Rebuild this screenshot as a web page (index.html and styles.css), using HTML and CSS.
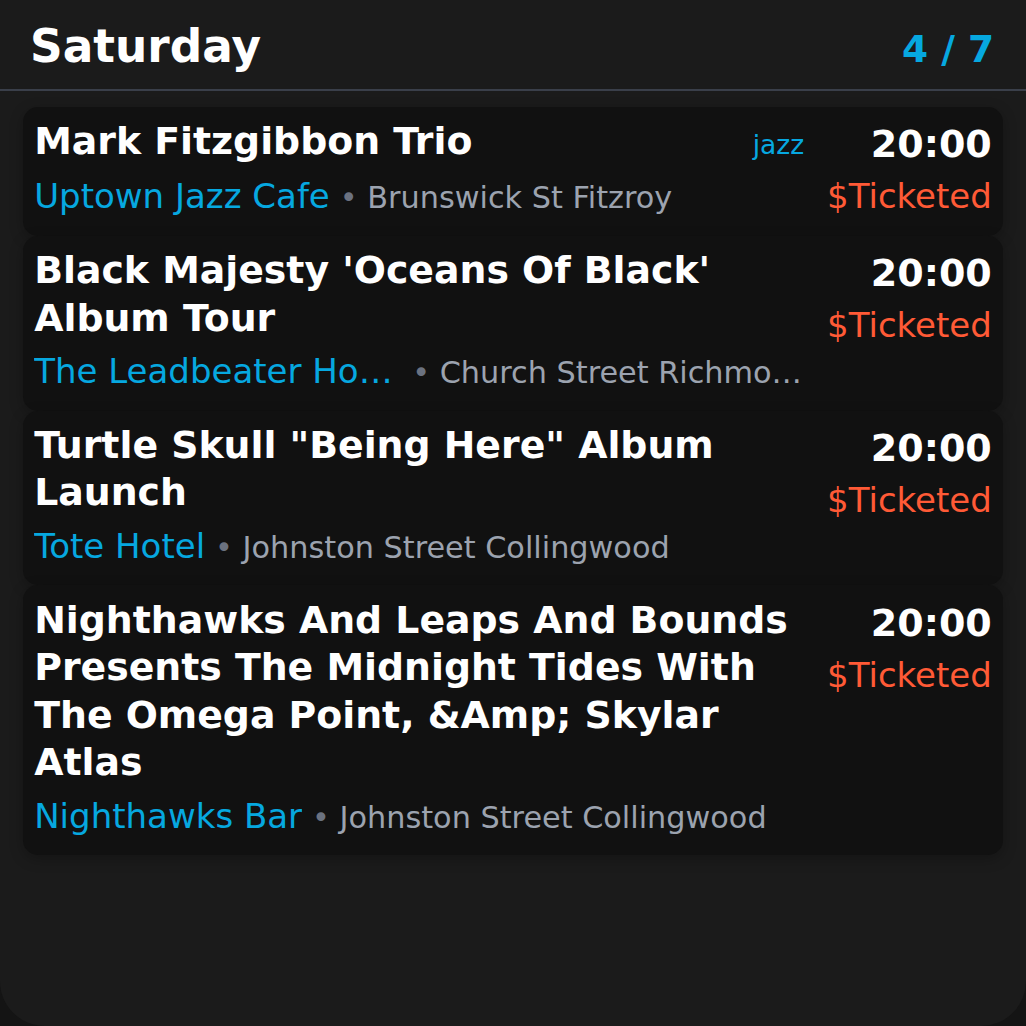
FILE: index.html
```html
<!DOCTYPE html>
<html>
<head>
<meta charset="utf-8">
<link rel="stylesheet" href="styles.css">
</head>
<body>
<div class="panel">
  <header class="head">
    <h1 class="day">Saturday</h1>
    <div class="count">4 / 7</div>
  </header>
  <div class="list">
    <div class="card">
      <div class="main">
        <div class="title-row">
          <div class="title">Mark Fitzgibbon Trio</div>
          <div class="tag">jazz</div>
        </div>
        <div class="where"><span class="venue">Uptown Jazz Cafe</span><span class="addr"><span class="dot">•</span> Brunswick St Fitzroy</span></div>
      </div>
      <div class="side">
        <div class="time">20:00</div>
        <div class="price">$Ticketed</div>
      </div>
    </div>
    <div class="card">
      <div class="main">
        <div class="title-row">
          <div class="title">Black Majesty 'Oceans Of Black' Album Tour</div>
        </div>
        <div class="where"><span class="venue">The Leadbeater Hotel</span><span class="addr"><span class="dot">•</span> Church Street Richmond</span></div>
      </div>
      <div class="side">
        <div class="time">20:00</div>
        <div class="price">$Ticketed</div>
      </div>
    </div>
    <div class="card">
      <div class="main">
        <div class="title-row">
          <div class="title">Turtle Skull "Being Here" Album Launch</div>
        </div>
        <div class="where"><span class="venue">Tote Hotel</span><span class="addr"><span class="dot">•</span> Johnston Street Collingwood</span></div>
      </div>
      <div class="side">
        <div class="time">20:00</div>
        <div class="price">$Ticketed</div>
      </div>
    </div>
    <div class="card">
      <div class="main">
        <div class="title-row">
          <div class="title">Nighthawks And Leaps And Bounds Presents The Midnight Tides With The Omega Point, &amp;Amp; Skylar Atlas</div>
        </div>
        <div class="where"><span class="venue">Nighthawks Bar</span><span class="addr"><span class="dot">•</span> Johnston Street Collingwood</span></div>
      </div>
      <div class="side">
        <div class="time">20:00</div>
        <div class="price">$Ticketed</div>
      </div>
    </div>
  </div>
</div>
</body>
</html>
```
FILE: styles.css
```css
html, body {
  margin: 0;
  padding: 0;
  background: #141414;
}
body {
  font-family: "DejaVu Sans", sans-serif;
  color: #fff;
}
.panel {
  width: 1026px;
  height: 1026px;
  box-sizing: border-box;
  background: #1b1b1b;
  border-radius: 0 0 45px 45px;
  overflow: hidden;
}
.head {
  display: flex;
  align-items: baseline;
  justify-content: space-between;
  padding: 17px 32px 13px 30px;
  border-bottom: 2px solid #3a3f4a;
  height: 59px;
}
.day {
  margin: 0;
  font-size: 45.4px;
  font-weight: bold;
  line-height: 59px;
}
.count {
  font-size: 37.5px;
  font-weight: bold;
  color: #06a8e0;
}
.list {
  display: flex;
  flex-direction: column;
  padding: 16px 22.8px 0;
}
.card {
  display: flex;
  gap: 22.8px;
  padding: 11.4px;
  background: #111111;
  border-radius: 15px;
  box-shadow: 0 4px 14px rgba(0, 0, 0, 0.25);
}
.main {
  flex: 1;
  min-width: 0;
}
.title-row {
  display: flex;
  align-items: baseline;
  gap: 15px;
}
.title {
  flex: 1;
  font-size: 37.8px;
  font-weight: bold;
  line-height: 47.5px;
}
.tag {
  font-size: 26.6px;
  line-height: 31px;
  padding-bottom: 7px;
  color: #06a8e0;
}
.where {
  display: flex;
  align-items: baseline;
  height: 57px;
  white-space: nowrap;
}
.venue {
  font-size: 34px;
  line-height: 58px;
  color: #06a8e0;
  max-width: 368px;
  overflow: hidden;
  text-overflow: ellipsis;
  flex-shrink: 0;
  margin-right: 10px;
}
.addr {
  font-size: 30.3px;
  line-height: 58px;
  color: #9ca3af;
  overflow: hidden;
  text-overflow: ellipsis;
  min-width: 0;
}
.dot {
  color: #6b7280;
}
.side {
  display: flex;
  flex-direction: column;
  align-items: flex-end;
}
.time {
  font-size: 38px;
  font-weight: bold;
  line-height: 53px;
}
.price {
  margin-top: 5px;
  font-size: 34px;
  color: #ff5a36;
  line-height: 41px;
}
```
